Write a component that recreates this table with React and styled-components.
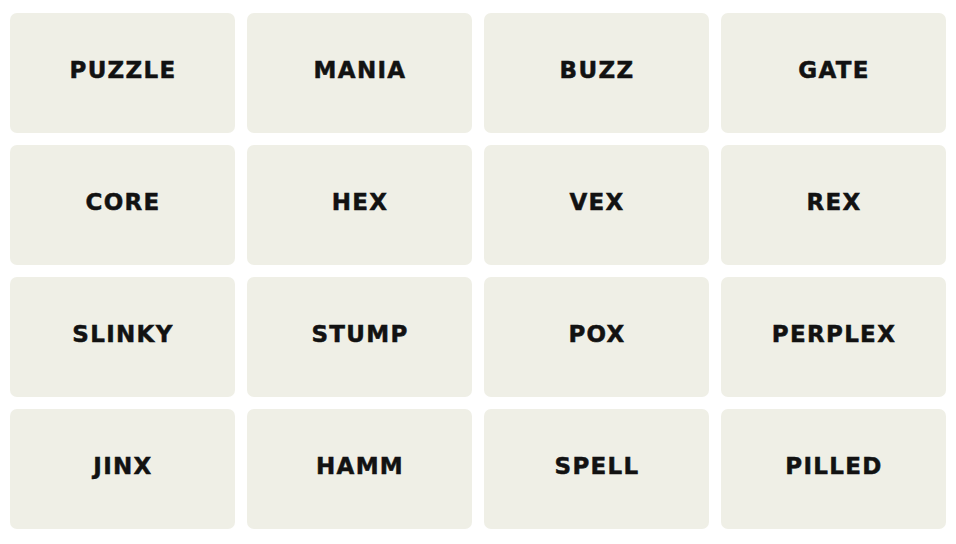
import React from "react";
import styled, { createGlobalStyle } from "styled-components";

const GlobalStyle = createGlobalStyle`
  html, body {
    margin: 0;
    padding: 0;
    background: #ffffff;
  }
`;

const Board = styled.div`
  display: grid;
  grid-template-columns: repeat(4, 225px);
  grid-auto-rows: 120px;
  gap: 12px;
  padding: 13px 10px 15px;
`;

const Tile = styled.button`
  display: flex;
  align-items: center;
  justify-content: center;
  border: none;
  border-radius: 7px;
  background: #efefe6;
  color: #121212;
  font-family: "DejaVu Sans", "Liberation Sans", sans-serif;
  font-weight: 700;
  font-size: 23px;
  letter-spacing: 1.3px;
  -webkit-text-stroke: 0.5px #121212;
  text-transform: uppercase;
  padding: 0 0 6px 1px;
  cursor: pointer;
`;

const words = [
  "PUZZLE", "MANIA", "BUZZ", "GATE",
  "CORE", "HEX", "VEX", "REX",
  "SLINKY", "STUMP", "POX", "PERPLEX",
  "JINX", "HAMM", "SPELL", "PILLED",
];

const App = () => (
  <>
    <GlobalStyle />
    <Board>
      {words.map((w) => (
        <Tile key={w}>{w}</Tile>
      ))}
    </Board>
  </>
);

export default App;
